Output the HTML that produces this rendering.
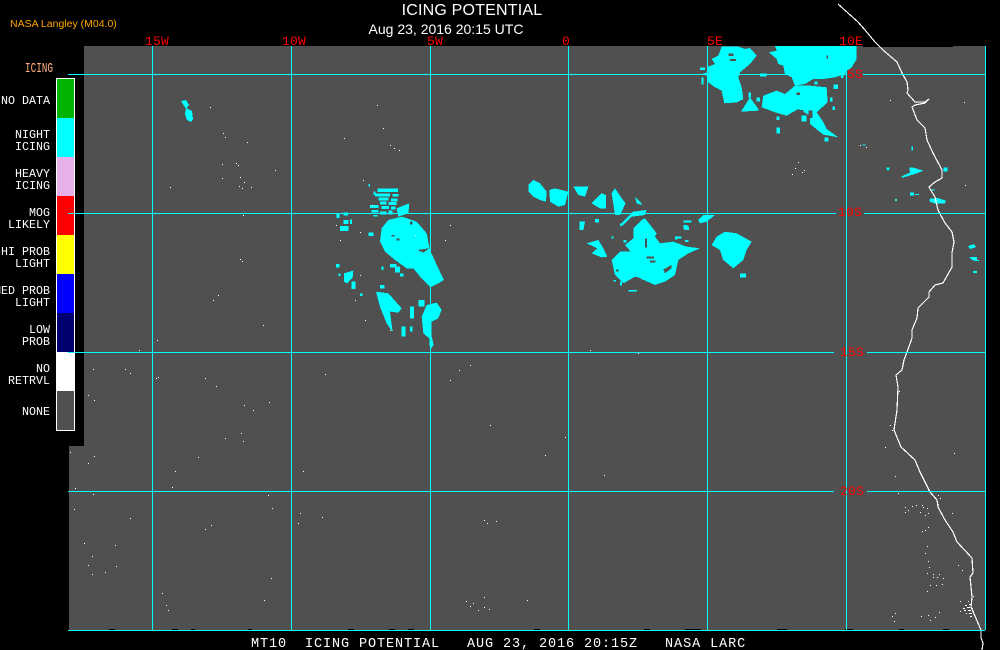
<!DOCTYPE html>
<html><head><meta charset="utf-8"><title>ICING POTENTIAL</title>
<style>
html,body{margin:0;padding:0;background:#000;width:1000px;height:650px;overflow:hidden}
svg{display:block}
text{font-family:"Liberation Mono",monospace}
.l{fill:#fff;font-size:11.67px;text-anchor:end}
.r{fill:#f00;font-size:13px;letter-spacing:.2px}
</style></head><body>
<svg width="1000" height="650" viewBox="0 0 1000 650" xmlns="http://www.w3.org/2000/svg">
<rect width="1000" height="650" fill="#000"/>
<path d="M84 46H863V47H953V46H985V630H69V446H84Z" fill="#505050" shape-rendering="crispEdges"/>
<path d="M109 629h6v1h-6zM172 629h6v1h-6zM191 629h4v1h-4zM248 629h4v1h-4zM348 629h6v1h-6zM389 629h6v1h-6zM408 629h6v1h-6zM534 629h6v1h-6zM644 629h6v1h-6zM685 629h16v1h-16zM777 629h10v1h-10zM845 629h8v1h-8zM899 629h5v1h-5zM943 629h6v1h-6z" fill="#000" shape-rendering="crispEdges"/>

<!-- cyan clouds -->
<g fill="#0ff" shape-rendering="crispEdges">
<g transform="translate(695,44) scale(.3333)">
<path d="M80 8L130 8 150 15 165 12 185 35 165 60 135 85 130 100 140 130 145 165 125 175 88 178 80 140 60 130 40 115 35 95 20 90 40 85 35 70 60 60 50 45 70 35Z"/>
<path d="M138 203L165 160 190 195 190 200Z"/>
<path d="M222 25L245 20 240 6 485 6 485 45 470 70 450 90 420 100 385 105 355 105 330 120 300 125 290 100 270 90 265 65 250 60 245 45Z"/>
<path d="M200 190L205 155 245 140 270 150 300 125 325 125 345 125 395 130 398 175 365 205 385 235 395 255 430 280 385 272 345 240 345 215 310 195 275 215 240 205Z"/>
<path d="M388 280h12v12h-12zM245 250h10v18h-10zM415 122h14v13h-14zM358 112h10v10h-10zM405 160h8v12h-8zM195 88h20v10h-20zM245 218h8v10h-8zM412 188h8v10h-8zM438 92h8v10h-8zM15 70h15v8h-15zM20 100h6v22h-6zM160 145h8v15h-8zM185 160h10v12h-10zM320 215h14v18h-14zM350 225h8v15h-8z"/>
<g fill="#505050">
<path d="M100 28h15v8h-15zM105 45h18v6h-18zM340 200h12v22h-12zM315 198h10v10h-10zM305 145h10v8h-10zM395 35h4v8h-4z"/>
</g>
</g>
<g transform="translate(330,170) scale(.3333)">
<path d="M150 215L155 175 175 150 215 140 260 155 290 190 300 240 325 295 342 330 325 340 302 352 270 320 250 295 230 295 195 270 165 245Z"/>
<path d="M138 365L175 370 215 415 205 428 180 425 188 487 170 460 150 410Z"/>
<path d="M275 440L290 405 320 398 335 420 325 445 305 455 305 500 311 525 300 540 298 505 280 490Z"/>
<path d="M42 310L70 302 68 322 52 340 42 335Z"/>
<path d="M65 335h12v22h-12zM18 282h10v10h-10zM115 188h15v10h-15zM20 130h8v14h-8zM40 150h15v12h-15zM30 168h25v15h-25zM60 148h6v14h-6zM180 282h20v10h-20zM195 290h15v18h-15zM210 310h10v10h-10zM155 290h6v10h-6zM240 410h12v35h-12zM265 390h18v20h-18zM215 470h12v30h-12zM240 470h8v15h-8zM90 370h8v8h-8zM25 310h6v8h-6zM150 345h14v10h-14z"/>
<path d="M200 115L238 100 235 130 205 140Z"/>
<path d="M142 56h62v10h-62zM135 70h45v9h-45zM188 72h18v8h-18zM145 82h30v9h-30zM183 85h20v9h-20zM150 94h20v9h-20zM176 96h24v9h-24zM120 105h25v9h-25zM155 108h22v9h-22zM183 110h14v9h-14zM125 120h20v8h-20zM150 125h20v9h-20zM175 122h12v12h-12zM130 135h12v5h-12zM115 42h5v8h-5zM130 65h6v10h-6zM40 128h14v8h-14z"/>
<g fill="#505050"><path d="M262 240L298 235 280 248ZM185 195h8v5h-8zM200 205h8v6h-8zM240 155h8v8h-8z"/></g>
</g>
<g transform="translate(600,210) scale(.3333)">
<path d="M125 30L135 25 170 70 165 80 180 100 220 95 260 110 300 115 265 130 235 150 225 195 195 215 165 225 120 205 125 165 110 145 75 105 100 85 100 55Z"/>
<path d="M35 150L60 125 125 125 125 205 105 200 70 220 45 195Z"/>
<path d="M85 240h26v5h-26zM40 210h8v5h-8zM60 215h6v12h-6zM70 90h10v8h-10zM60 40h8v8h-8zM250 45h12v14h-12zM225 80h8v8h-8zM255 90h10v6h-10z"/>
<g fill="#505050"><path d="M135 85h6v28h-6zM190 178L215 165 215 175 195 190ZM140 140h22v5h-22zM150 152h16v5h-16zM48 178h8v6h-8z"/></g>
</g>
<g transform="translate(520,170) scale(.3333)">
<path d="M25 45L40 30 60 40 80 65 78 95 60 90 40 80 25 65Z"/>
<path d="M88 60L105 55 145 65 135 105 115 110 90 95Z"/>
<path d="M160 50H205L195 80 175 75Z"/>
<path d="M215 100L245 70 258 75 258 115 240 115Z"/>
<path d="M275 70L285 55 305 85 317 100 300 135 285 135Z"/>
<path d="M345 80L365 100 365 105 350 100Z"/>
<path d="M178 155H195L190 180 178 180Z"/>
<path d="M200 220L235 210 250 235 262 260 245 262 215 250 232 235Z"/>
<path d="M575 225L590 200 615 185 650 190 695 215 680 240 670 270 640 295 610 270 600 240Z"/>
<path d="M535 150L550 135 585 135 560 155 540 160Z"/>
<path d="M305 160L340 125 380 120 375 135 335 140 310 165Z"/>
<path d="M225 147h12v10h-12zM660 310h18v12h-18zM490 152h25v6h-25zM470 200h15v5h-15zM495 170h12v10h-12zM275 200h6v5h-6z"/>
</g>
<g transform="translate(680,0) scale(.3333)">
<path d="M663 530L690 518 688 503 700 503 730 512 705 522 668 533Z"/>
<path d="M620 502h8v8h-8zM690 578h12v8h-12zM705 582h12v3h-12zM645 597h6v6h-6zM790 503h12v12h-12zM755 568h10v4h-10zM750 596L772 594 798 602 795 610 765 611 748 604Z"/>
<path d="M548 433h8v4h-8zM695 440h4v12h-4z"/>
</g>
<path d="M181 101l5-1 3 5-3 4zM186 108l6 3 1 8-2 3-4-2-2-6zM968 246l6-2 2 3-6 2zM969 257h8v3l2 0v1h-3l-4-1zM973 271h4v2h-4z"/>
</g>

<!-- white specks -->
<g transform="translate(0,.5)"><path stroke="#fff" fill="none" shape-rendering="crispEdges" d="M210 107h1M223 133h1M225 137h1M247 142h1M222 164h1M236 163h1M238 165h1M222 178h1M240 177h1M239 186h1M244 182h1M170 187h1M275 170h1M242 188h1M251 187h1M243 215h1M240 259h1M242 261h1M218 295h1M213 300h1M263 325h1M157 340h1M139 350h1M93 369h1M125 369h1M130 373h1M156 378h1M158 377h1M88 395h1M94 400h1M205 378h1M325 374h1M244 405h1M269 402h1M253 410h1M70 452h1M94 456h1M88 463h1M92 556h1M75 488h1M93 494h1M74 509h1M130 518h1M115 545h1M84 543h1M116 566h1M105 572h1M88 565h1M92 574h1M152 526h1M172 487h1M175 471h1M216 386h1M268 495h1M272 508h1M205 529h1M211 525h1M225 438h1M241 433h1M243 441h1M198 457h1M162 593h1M166 605h1M168 610h1M271 578h1M264 600h1M298 523h1M303 471h1M300 513h1M322 517h1M450 380h1M459 370h1M470 365h1M490 425h1M545 455h1M604 475h1M590 350h1M638 353h1M565 437h1M527 600h1M484 520h1M487 523h1M496 521h1M484 597h1M466 601h1M470 606h1M473 603h1M478 610h1M484 607h1M489 609h1M377 105h1M383 128h1M390 145h1M394 148h1M399 150h1M344 138h1M363 180h1M372 205h1M360 232h1M336 225h1M340 240h1M360 275h1M355 300h1M365 320h1M390 330h1M415 235h1M445 240h1M450 225h1M798 162h1M795 168h1M802 172h1M804 170h1M792 174h1M890 100h1M916 102h1M964 102h1M866 147h1M860 145h1M965 185h1M890 425h1M892 430h1M885 447h1M895 476h1M898 493h1M905 507h1M908 510h1M912 506h1M916 505h1M905 512h1M923 507h1M927 508h1M920 512h1M925 515h1M928 513h1M922 505h1M938 495h1M940 498h1M938 504h1M952 513h1M922 531h1M925 530h1M928 527h1M927 546h1M925 553h1M928 561h1M929 567h1M927 573h1M933 574h1M939 574h1M933 577h1M937 577h1M943 578h1M930 585h1M936 585h1M942 584h1M927 591h1M958 565h1M962 570h1M960 601h1M921 616h1M928 615h1M935 617h1M930 620h1M939 612h1M892 616h1M895 613h1M894 621h1M965 605h2M969 604h2M963 608h2M967 607h3M972 608h1M960 611h1M964 610h2M968 610h3M973 611h1M966 613h1M969 613h3M974 614h1M970 616h2M973 596h1M968 601h1M971 602h1M899 391h1M954 453h1"/></g>

<!-- coast -->
<g fill="none" stroke="#fff" stroke-width="1.2" shape-rendering="crispEdges">
<polyline points="838,4 858,22 865,30 875,42 883,50 897,62 902,73 907,82 908,90 907,93 915,102 925,102 929,99 925,103 915,105 912,107 917,120 925,128 927,140 933,153 942,170 942,178 935,182 929,187 935,197 938,210 939,212 945,223 952,232 954,242 952,253 952,267 943,283 935,285 929,292 929,297 918,308 917,318 912,330 912,338 907,352 904,360 902,370 896,375 898,387 897,410 894,430 901,447 915,460 920,472 930,492 937,500 938,507 945,520 953,532 957,542 972,558 973,573 970,577 972,597 971,607 978,623 981,630 981,638 983,643 982,650"/>
</g>

<!-- grid -->
<g stroke="#0ff" stroke-width="1" shape-rendering="crispEdges" fill="none">
<path d="M152.5 46V630M291.5 46V630M430.5 46V630M568.5 46V630M707.5 46V630M846.5 46V630M985.5 46V630"/>
<path d="M68 74.5H985M68 213.5H985M68 352.5H985M68 491.5H985M68 630.5H985"/>
</g>
<g fill="#505050" shape-rendering="crispEdges">
<rect x="847" y="70" width="16" height="8"/><rect x="836" y="207" width="28" height="10"/><rect x="834" y="347" width="33" height="10"/><rect x="834" y="486" width="33" height="10"/>
</g>
<path d="M846.5 207V217M846.5 347V357M846.5 486V496" stroke="#0ff" stroke-width="1" shape-rendering="crispEdges"/>

<!-- legend -->
<g shape-rendering="crispEdges">
<rect x="56" y="78" width="19" height="353" fill="#fff"/>
<rect x="57" y="79" width="17" height="39" fill="#00b400"/>
<rect x="57" y="118" width="17" height="39" fill="#0ff"/>
<rect x="57" y="157" width="17" height="39" fill="#e8b0e8"/>
<rect x="57" y="196" width="17" height="39" fill="#f00"/>
<rect x="57" y="235" width="17" height="39" fill="#ff0"/>
<rect x="57" y="274" width="17" height="39" fill="#00f"/>
<rect x="57" y="313" width="17" height="39" fill="#000070"/>
<rect x="57" y="352" width="17" height="39" fill="#fff"/>
<rect x="57" y="391" width="17" height="39" fill="#505050"/>
<path d="M68 213.5H74M68 352.5H74" stroke="#0ff" stroke-width="1"/>
</g>
<g>
<text class="l" x="50" y="104">NO DATA</text>
<text class="l" x="50" y="138">NIGHT</text><text class="l" x="50" y="150">ICING</text>
<text class="l" x="50" y="177">HEAVY</text><text class="l" x="50" y="189">ICING</text>
<text class="l" x="50" y="216">MOG</text><text class="l" x="50" y="228">LIKELY</text>
<text class="l" x="50" y="255">HI PROB</text><text class="l" x="50" y="267">LIGHT</text>
<text class="l" x="50" y="294">MED PROB</text><text class="l" x="50" y="306">LIGHT</text>
<text class="l" x="50" y="333">LOW</text><text class="l" x="50" y="345">PROB</text>
<text class="l" x="50" y="372">NO</text><text class="l" x="50" y="384">RETRVL</text>
<text class="l" x="50" y="415">NONE</text>
</g>
<text transform="translate(53,72) scale(.8,1.15)" text-anchor="end" style="fill:#ffb080;font-size:11.67px">ICING</text>

<!-- red labels -->
<text class="r" x="145" y="45">15W</text>
<text class="r" x="282" y="45">10W</text>
<text class="r" x="427" y="45">5W</text>
<text class="r" x="562" y="45">0</text>
<text class="r" x="707" y="45">5E</text>
<text class="r" x="839" y="45">10E</text>
<text class="r" x="847" y="78">5S</text>
<text class="r" x="838" y="216">10S</text>
<text class="r" x="840" y="356">15S</text>
<text class="r" x="840" y="495">20S</text>

<!-- titles -->
<text x="10" y="27" style="fill:#ffa500;font-size:10.5px;font-family:'Liberation Sans',sans-serif">NASA Langley (M04.0)</text>
<text x="472" y="15" text-anchor="middle" style="fill:#fff;font-size:16px;font-family:'Liberation Sans',sans-serif;letter-spacing:.2px">ICING POTENTIAL</text>
<text x="446" y="34" text-anchor="middle" style="fill:#fff;font-size:14px;font-family:'Liberation Sans',sans-serif">Aug 23, 2016 20:15 UTC</text>
<text x="251" y="647" xml:space="preserve" style="fill:#fff;font-size:13.5px;letter-spacing:.9px;white-space:pre">MT10  ICING POTENTIAL   AUG 23, 2016 20:15Z   NASA LARC</text>
</svg>
</body></html>
